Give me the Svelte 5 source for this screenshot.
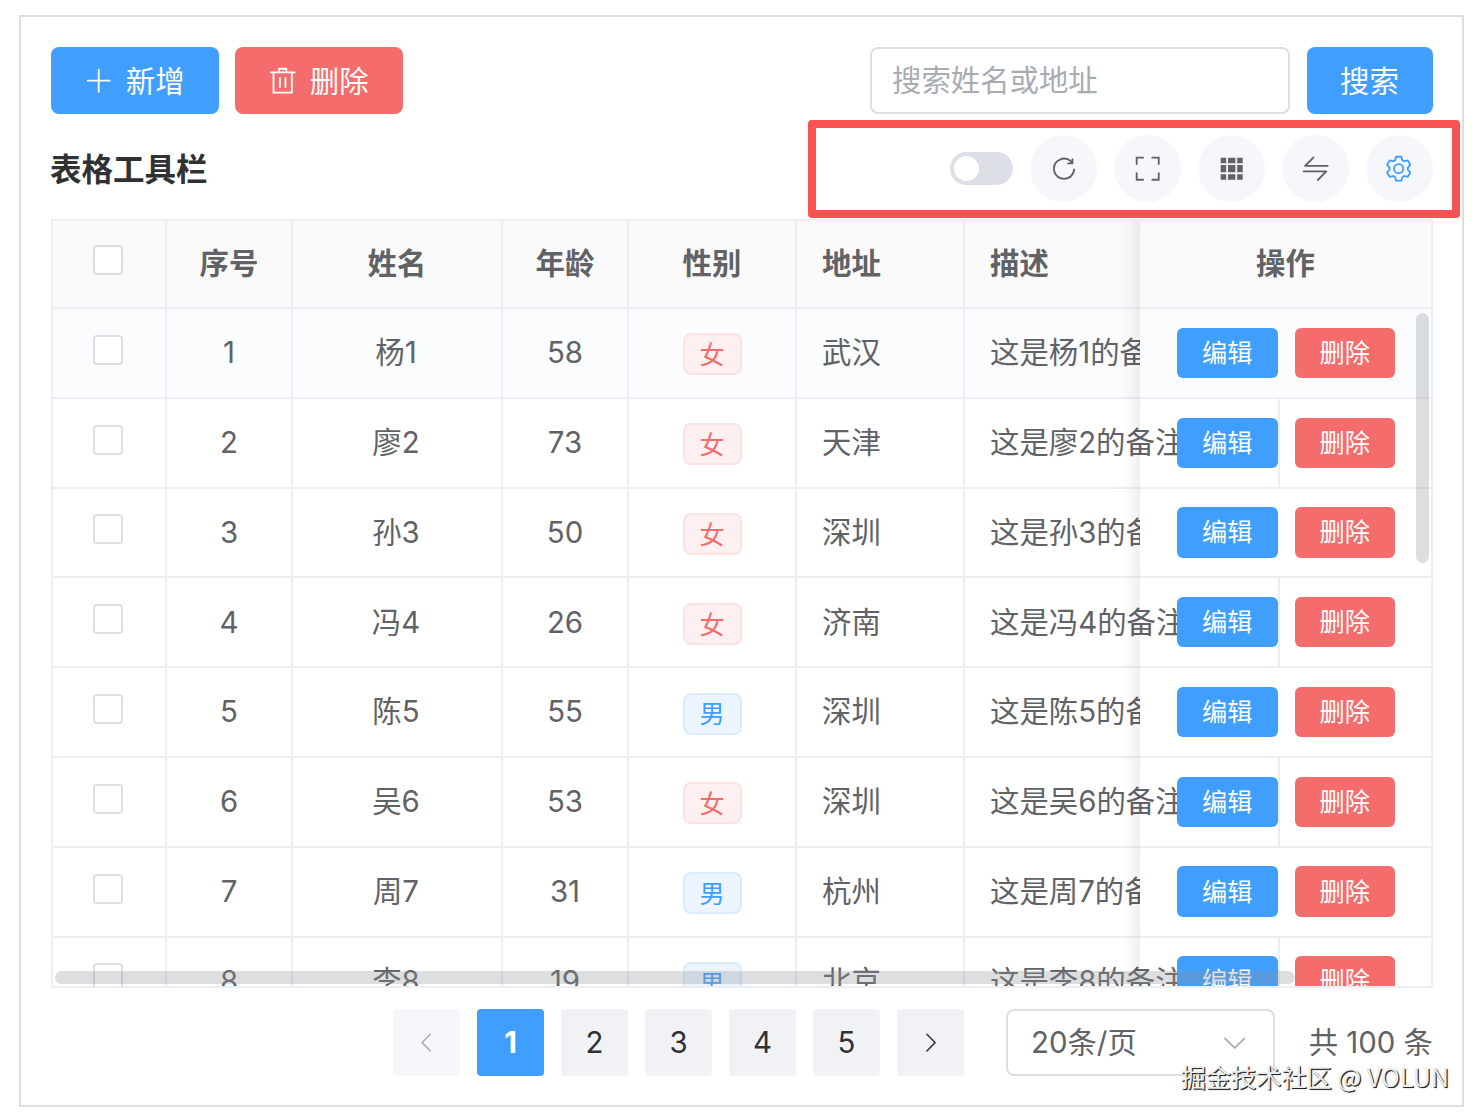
<script lang="ts">
  type Row = { id: number; name: string; age: number; gender: string; city: string };

  const rows: Row[] = [
    { id: 1, name: '杨1', age: 58, gender: '女', city: '武汉' },
    { id: 2, name: '廖2', age: 73, gender: '女', city: '天津' },
    { id: 3, name: '孙3', age: 50, gender: '女', city: '深圳' },
    { id: 4, name: '冯4', age: 26, gender: '女', city: '济南' },
    { id: 5, name: '陈5', age: 55, gender: '男', city: '深圳' },
    { id: 6, name: '吴6', age: 53, gender: '女', city: '深圳' },
    { id: 7, name: '周7', age: 31, gender: '男', city: '杭州' },
    { id: 8, name: '李8', age: 19, gender: '男', city: '北京' },
  ];

  const pages = [1, 2, 3, 4, 5];
  let current = $state(1);

  const icons = {
    plus: 'M480 480V128a32 32 0 0 1 64 0v352h352a32 32 0 1 1 0 64H544v352a32 32 0 1 1-64 0V544H128a32 32 0 0 1 0-64z',
    trash:
      'M160 256H96a32 32 0 0 1 0-64h256V95.936a32 32 0 0 1 32-32h256a32 32 0 0 1 32 32V192h256a32 32 0 1 1 0 64h-64v672a32 32 0 0 1-32 32H192a32 32 0 0 1-32-32zm448-64v-64H416v64zM224 896h576V256H224zm192-128a32 32 0 0 1-32-32V416a32 32 0 0 1 64 0v320a32 32 0 0 1-32 32m192 0a32 32 0 0 1-32-32V416a32 32 0 0 1 64 0v320a32 32 0 0 1-32 32',
    arrow:
      'M340.864 149.312a30.592 30.592 0 0 0 0 42.752L652.736 512 340.864 831.872a30.592 30.592 0 0 0 0 42.752 29.12 29.12 0 0 0 41.728 0L714.24 534.336a32 32 0 0 0 0-44.672L382.592 149.376a29.12 29.12 0 0 0-41.728 0z',
  };

  const tools = [
    {
      name: 'refresh',
      path: 'M784.512 230.272v-50.56a32 32 0 1 1 64 0v149.056a32 32 0 0 1-32 32H667.52a32 32 0 1 1 0-64h92.992A320 320 0 1 0 524.8 833.152a320 320 0 0 0 320-320h64a384 384 0 0 1-384 384 384 384 0 0 1-384-384 384 384 0 0 1 643.712-282.88',
    },
    {
      name: 'fullscreen',
      path: 'm160 96.064 192 .192a32 32 0 0 1 0 64l-192-.192V352a32 32 0 0 1-64 0V96h64zm0 831.872V928H96V672a32 32 0 1 1 64 0v191.936l192-.192a32 32 0 1 1 0 64zM864 96.064V96h64v256a32 32 0 1 1-64 0V160.064l-192 .192a32 32 0 1 1 0-64zm0 831.872-192-.192a32 32 0 0 1 0-64l192 .192V672a32 32 0 1 1 64 0v256h-64z',
    },
    {
      name: 'grid',
      path: 'M640 384v256H384V384zm64 0h192v256H704zm-64 512H384V704h256zm64 0V704h192v192zm-64-768v192H384V128zm64 0h192v192H704zM320 384v256H128V384zm0 512H128V704h192zm0-768v192H128V128z',
    },
    {
      name: 'switch',
      path: 'M118.656 438.656a32 32 0 0 1 0-45.248L416 96l4.48-3.776A32 32 0 0 1 461.248 96l3.712 4.48a32.064 32.064 0 0 1-3.712 40.832L218.56 384H928a32 32 0 1 1 0 64H141.248a32 32 0 0 1-22.592-9.344zM64 608a32 32 0 0 1 32-32h786.752a32 32 0 0 1 22.656 54.592L608 928l-4.48 3.776a32.064 32.064 0 0 1-40.832-49.024L805.632 640H96a32 32 0 0 1-32-32',
    },
    {
      name: 'setting',
      path: 'M600.704 64a32 32 0 0 1 30.464 22.208l35.2 109.376c14.784 7.232 28.928 15.36 42.432 24.512l112.384-24.192a32 32 0 0 1 34.432 15.36L944.32 364.8a32 32 0 0 1-4.032 37.504l-77.12 85.12a357.12 357.12 0 0 1 0 49.024l77.12 85.248a32 32 0 0 1 4.032 37.504l-88.704 153.6a32 32 0 0 1-34.432 15.296L708.8 803.904c-13.44 9.088-27.648 17.28-42.368 24.512l-35.264 109.376A32 32 0 0 1 600.704 960H423.296a32 32 0 0 1-30.464-22.208L357.696 828.48a351.616 351.616 0 0 1-42.56-24.64l-112.32 24.256a32 32 0 0 1-34.432-15.36L79.68 659.2a32 32 0 0 1 4.032-37.504l77.12-85.248a357.12 357.12 0 0 1 0-48.896l-77.12-85.248A32 32 0 0 1 79.68 364.8l88.704-153.6a32 32 0 0 1 34.432-15.296l112.32 24.256c13.568-9.152 27.776-17.408 42.56-24.64l35.2-109.312A32 32 0 0 1 423.232 64H600.64zm-23.424 64H446.72l-36.352 113.088-24.512 11.968a294.113 294.113 0 0 0-34.816 20.096l-22.656 15.36-116.224-25.088-65.28 113.152 79.68 88.192-1.92 27.136a293.12 293.12 0 0 0 0 40.192l1.92 27.136-79.808 88.192 65.344 113.152 116.224-25.024 22.656 15.296a294.113 294.113 0 0 0 34.816 20.096l24.512 11.968L446.72 896h130.688l36.48-113.152 24.448-11.904a288.282 288.282 0 0 0 34.752-20.096l22.592-15.296 116.288 25.024 65.28-113.152-79.744-88.192 1.92-27.136a293.12 293.12 0 0 0 0-40.256l-1.92-27.136 79.808-88.128-65.344-113.152-116.288 24.96-22.592-15.232a287.616 287.616 0 0 0-34.752-20.096l-24.448-11.904L577.344 128zM512 320a192 192 0 1 1 0 384 192 192 0 0 1 0-384m0 64a128 128 0 1 0 0 256 128 128 0 0 0 0-256',
    },
  ];
</script>

{#snippet icon(path: string)}
  <svg class="icon" viewBox="0 0 1024 1024" aria-hidden="true"><path fill="currentColor" d={path} /></svg>
{/snippet}

<div class="card">
  <div class="actions">
    <button class="btn primary wide">{@render icon(icons.plus)}<span>新增</span></button>
    <button class="btn danger wide">{@render icon(icons.trash)}<span>删除</span></button>
    <div class="search">
      <input class="input" placeholder="搜索姓名或地址" />
      <button class="btn primary go">搜索</button>
    </div>
  </div>

  <div class="toolbar">
    <h2>表格工具栏</h2>
    <div class="tools">
      <span class="toggle"><i></i></span>
      {#each tools as tool}
        <button class="round {tool.name}" aria-label={tool.name}>{@render icon(tool.path)}</button>
      {/each}
    </div>
    <div class="highlight"></div>
  </div>

  <div class="table">
    <div class="row head">
      <div class="cell check"><span class="box"></span></div>
      <div class="cell index">序号</div>
      <div class="cell name">姓名</div>
      <div class="cell age">年龄</div>
      <div class="cell gender">性别</div>
      <div class="cell city">地址</div>
      <div class="cell desc">描述</div>
      <div class="cell fixed solid">操作</div>
    </div>
    <div class="body">
      {#each rows as row, i}
        <div class="row" class:hover={i === 0}>
          <div class="cell check"><span class="box"></span></div>
          <div class="cell index">{row.id}</div>
          <div class="cell name">{row.name}</div>
          <div class="cell age">{row.age}</div>
          <div class="cell gender"><span class="tag" class:male={row.gender === '男'}>{row.gender}</span></div>
          <div class="cell city">{row.city}</div>
          <div class="cell desc">这是{row.name}的备注</div>
          <div class="cell fixed" class:solid={i % 2 === 0}>
            <button class="btn primary small">编辑</button>
            <button class="btn danger small">删除</button>
          </div>
        </div>
      {/each}
    </div>
    <div class="bar vertical"></div>
    <div class="bar horizontal"></div>
  </div>

  <div class="pager">
    <button class="page prev" aria-label="prev">{@render icon(icons.arrow)}</button>
    {#each pages as n}
      <button class="page" class:active={n === current} onclick={() => (current = n)}>{n}</button>
    {/each}
    <button class="page next" aria-label="next">{@render icon(icons.arrow)}</button>
    <div class="select"><span>20条/页</span>{@render icon(icons.arrow)}</div>
    <div class="total">共 100 条</div>
  </div>

  <div class="watermark">掘金技术社区 @ VOLUN</div>
</div>

<style>
  :global(body) {
    background: #fff;
    overflow: hidden;
  }

  .card {
    position: relative;
    box-sizing: border-box;
    width: 1445px;
    height: 1092px;
    margin: 15px 0 0 19px;
    padding: 30px 29px 0 30px;
    border: 2px solid #dcdee0;
    font-family: Inter, 'Noto Sans CJK SC', sans-serif;
    font-size: 29.4px;
    line-height: 1;
    color: #606266;
  }

  .card * {
    box-sizing: border-box;
  }

  button,
  input {
    margin: 0;
    padding: 0;
    border: 0;
    font: inherit;
    color: inherit;
  }

  .icon {
    width: 29.4px;
    height: 29.4px;
    flex: none;
    display: block;
  }

  .btn {
    display: flex;
    align-items: center;
    justify-content: center;
    flex: none;
    border-radius: 8px;
    color: #fff;
    white-space: nowrap;
  }

  .primary {
    background: #409eff;
  }

  .danger {
    background: #f56c6c;
  }

  .actions {
    display: flex;
    gap: 16px;
    height: 67px;
  }

  .wide {
    width: 168px;
    gap: 12px;
    padding-right: 1px;
  }

  .wide span {
    padding-top: 2px;
  }

  .search {
    display: flex;
    gap: 17px;
    margin-left: auto;
  }

  .input {
    width: 420px;
    padding: 0 20px;
    border: 2px solid #dcdfe2;
    border-radius: 8px;
    background: #fff;
  }

  .input::placeholder {
    color: #a8abb2;
    opacity: 1;
  }

  .go {
    width: 126px;
    padding: 2px 1px 0 0;
  }

  .toolbar {
    position: relative;
    display: flex;
    align-items: center;
    justify-content: space-between;
    height: 67px;
    margin-top: 21px;
  }

  h2 {
    margin: 0 0 0 -1px;
    padding-top: 3px;
    font-size: 31.5px;
    line-height: 36px;
    font-weight: 700;
    color: #303133;
  }

  .tools {
    display: flex;
    align-items: center;
    gap: 17px;
  }

  .toggle {
    width: 63px;
    height: 33px;
    padding: 4px;
    border-radius: 17px;
    background: #dcdfe6;
  }

  .toggle i {
    display: block;
    width: 25px;
    height: 25px;
    border-radius: 50%;
    background: #fff;
  }

  .round {
    display: flex;
    align-items: center;
    justify-content: center;
    width: 67px;
    height: 67px;
    border-radius: 50%;
    background: #f5f7fa;
  }

  .setting {
    padding-right: 2px;
    color: #409eff;
  }

  /* Callout frame around the tool buttons */
  .highlight {
    position: absolute;
    top: -15px;
    right: -27px;
    width: 652px;
    height: 98px;
    border: 8px solid #fa5252;
    border-radius: 4px;
    pointer-events: none;
  }

  .table {
    position: relative;
    height: 769px;
    margin-top: 17px;
    border: 2px solid #ebeef2;
    overflow: hidden;
  }

  .row {
    display: flex;
    height: 89.8px;
    background: #fff;
  }

  .row.head {
    height: 88px;
    background: #fafafa;
    font-weight: 700;
  }

  .row.hover {
    background: #fafcfe;
  }

  .body {
    height: 677px;
    overflow: hidden;
  }

  .cell {
    display: flex;
    flex: none;
    align-items: center;
    justify-content: center;
    border-right: 2px solid #ebeef2;
    border-bottom: 2px solid #ebeef2;
    white-space: nowrap;
  }

  .head .cell {
    padding-bottom: 1px;
  }

  .cell.check {
    width: 114px;
    padding: 0 2px 6px 0;
  }

  .head .cell.check {
    padding-bottom: 8px;
  }

  .index { width: 126px; }
  .name { width: 210px; }
  .age { width: 126px; }
  .gender { width: 168px; }
  .city { width: 168px; }
  .desc { width: 315px; }

  .body .name {
    padding-right: 2px;
  }

  .body .gender {
    padding-top: 3px;
  }

  .city,
  .desc {
    justify-content: flex-start;
    padding-left: 25px;
  }

  .fixed {
    position: relative;
    width: 291px;
    margin-left: -140px;
    gap: 17px;
    border-right: 0;
  }

  .body .fixed {
    padding-left: 1px;
  }

  .row .solid {
    background-color: #fff;
  }

  .row.head .solid {
    background-color: #fafafa;
  }

  .row.hover .solid {
    background-color: #fafcfe;
  }

  .fixed::before {
    content: '';
    position: absolute;
    top: 0;
    bottom: -2px;
    left: -21px;
    width: 21px;
    box-shadow: inset -21px 0 21px -21px rgba(0, 0, 0, 0.13);
  }

  .box {
    width: 30px;
    height: 30px;
    border: 2px solid #dcdfe2;
    border-radius: 4px;
    background: #fff;
  }

  .tag {
    display: flex;
    align-items: center;
    justify-content: center;
    width: 59px;
    height: 42px;
    padding-top: 3px;
    border: 2px solid #fde2e2;
    border-radius: 8px;
    background: #fef0f0;
    font-size: 25.2px;
    color: #f56c6c;
  }

  .tag.male {
    border-color: #d9ecff;
    background: #ecf5ff;
    color: #409eff;
  }

  .small {
    width: 100.5px;
    height: 50.4px;
    padding-top: 1px;
    border-radius: 6px;
    font-size: 25.2px;
  }

  .bar {
    position: absolute;
    border-radius: 7px;
    background: rgba(144, 147, 153, 0.3);
  }

  .vertical {
    top: 92px;
    right: 2px;
    width: 13px;
    height: 250px;
  }

  .horizontal {
    left: 2px;
    bottom: 2px;
    width: 1240px;
    height: 13px;
  }

  .pager {
    display: flex;
    justify-content: flex-end;
    height: 67px;
    margin-top: 21px;
    gap: 17px;
  }

  .page {
    display: flex;
    align-items: center;
    justify-content: center;
    flex: none;
    width: 67px;
    border-radius: 4px;
    background: #f0f2f5;
    color: #303133;
  }

  .page .icon {
    width: 25.2px;
    height: 25.2px;
  }

  .page.active {
    background: #409eff;
    color: #fff;
    font-weight: 700;
  }

  .prev {
    background: #f5f7fa;
    color: #a8abb2;
  }

  .prev .icon {
    transform: scaleX(-1);
  }

  .select {
    display: flex;
    align-items: center;
    justify-content: space-between;
    width: 269px;
    margin-left: 25px;
    padding: 0 24px 0 23px;
    border: 2px solid #dcdfe2;
    border-radius: 8px;
  }

  .select .icon {
    transform: rotate(90deg);
    color: #a8abb2;
  }

  .total {
    width: 125px;
    margin-left: 16px;
    line-height: 67px;
    text-align: right;
    white-space: nowrap;
  }

  .watermark {
    position: absolute;
    right: 13px;
    bottom: 14px;
    font-family: 'Noto Sans CJK SC', sans-serif;
    font-size: 25.2px;
    line-height: 30px;
    color: #eee;
    text-shadow: 1px 1px 1px #222, 1px 1px 0 #444;
    white-space: nowrap;
  }
</style>
